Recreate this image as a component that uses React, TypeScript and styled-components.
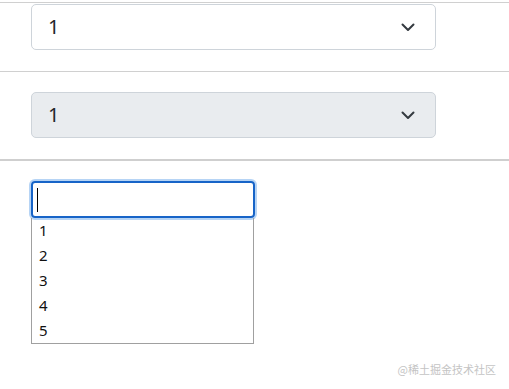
import React from "react";
import styled, { createGlobalStyle } from "styled-components";

const Global = createGlobalStyle`
  html, body { margin: 0; padding: 0; background: #fff; }
  body { font-family: "Segoe UI", "Noto Sans", "Liberation Sans", sans-serif; color: #212529; }
`;

const Page = styled.div`
  position: relative;
  width: 509px;
  height: 389px;
  overflow: hidden;
  padding-top: 2px;
  box-sizing: border-box;
`;

const Rule = styled.div<{ $thick?: boolean }>`
  height: ${(p) => (p.$thick ? 2 : 1)}px;
  background: ${(p) => (p.$thick ? "#cfcfcf" : "#d0d0d0")};
`;

const Section = styled.div<{ $top: number; $bottom: number }>`
  padding: ${(p) => p.$top}px 0 ${(p) => p.$bottom}px 31px;
`;

const Select = styled.div<{ $disabled?: boolean }>`
  width: 405px;
  height: 46px;
  box-sizing: border-box;
  border: 1px solid #ced4da;
  border-radius: 5px;
  background: ${(p) => (p.$disabled ? "#e9ecef" : "#fff")};
  display: flex;
  align-items: center;
  justify-content: space-between;
  padding: 0 20px 0 16px;
  font-size: 20px;
  color: #212529;
`;

const Value = styled.span`
  line-height: 1;
`;

const Chevron = () => (
  <svg width="14" height="10" viewBox="0 0 14 10">
    <path d="M1.5 2.5 L7 8 L12.5 2.5" fill="none" stroke="#343a40" strokeWidth="2" strokeLinecap="round" strokeLinejoin="round" />
  </svg>
);

const Combo = styled.div`
  width: 224px;
`;

const Field = styled.div`
  height: 37px;
  box-sizing: border-box;
  border: 2px solid #1764c8;
  border-radius: 4px;
  box-shadow: 0 0 0 2px #b6d4f5;
  display: flex;
  align-items: center;
  padding-left: 4px;
`;

const Caret = styled.span`
  width: 1px;
  height: 24px;
  background: #000;
`;

const List = styled.div`
  width: 223px;
  box-sizing: border-box;
  border: 1px solid #a0a0a0;
  border-top: none;
  display: flex;
  flex-direction: column;
`;

const Item = styled.div`
  height: 25px;
  line-height: 25px;
  padding-left: 7px;
  font-size: 15px;
  color: #111;
`;

const Watermark = styled.div`
  position: absolute;
  right: 13px;
  bottom: 12px;
  font-size: 11px;
  color: #c4c4c4;
  font-family: "Noto Sans CJK SC", "Noto Sans", sans-serif;
`;

export default function App() {
  return (
    <Page>
      <Global />
      <Rule />
      <Section $top={1} $bottom={21}>
        <Select>
          <Value>1</Value>
          <Chevron />
        </Select>
      </Section>
      <Rule />
      <Section $top={20} $bottom={21}>
        <Select $disabled>
          <Value>1</Value>
          <Chevron />
        </Select>
      </Section>
      <Rule $thick />
      <Section $top={20} $bottom={0}>
        <Combo>
          <Field>
            <Caret />
          </Field>
          <List>
            {[1, 2, 3, 4, 5].map((n) => (
              <Item key={n}>{n}</Item>
            ))}
          </List>
        </Combo>
      </Section>
      <Watermark>@稀土掘金技术社区</Watermark>
    </Page>
  );
}
